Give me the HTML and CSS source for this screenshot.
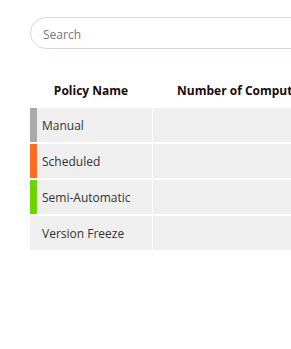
FILE: index.html
```html
<!DOCTYPE html>
<html lang="en">
<head>
    <meta charset="UTF-8">
    <meta name="viewport" content="width=device-width, initial-scale=1.0">
    <title>Policies</title>
    <link rel="stylesheet" href="styles.css">
</head>
<body>
    <div class="page">
        <input type="text" class="search-box" placeholder="Search">

        <table class="policy-table">
            <thead>
                <tr>
                    <th class="col-name">Policy Name</th>
                    <th class="col-count">Number of Computers</th>
                </tr>
            </thead>
            <tbody>
                <tr>
                    <td class="policy manual">Manual</td>
                    <td></td>
                </tr>
                <tr>
                    <td class="policy scheduled">Scheduled</td>
                    <td></td>
                </tr>
                <tr>
                    <td class="policy semi">Semi-Automatic</td>
                    <td></td>
                </tr>
                <tr>
                    <td class="policy freeze">Version Freeze</td>
                    <td></td>
                </tr>
            </tbody>
        </table>
    </div>
</body>
</html>
```

FILE: styles.css
```css
html, body {
    margin: 0;
    overflow: hidden;
}
body {
    font-family: 'Open Sans', sans-serif;
    font-size: 12px;
    color: #333;
    background-color: #fff;
}
.page {
    width: 600px;
    padding: 17px 0 0 30px;
}
.search-box {
    display: block;
    box-sizing: border-box;
    width: 420px;
    height: 32px;
    padding: 2px 12px 0;
    font-family: 'Open Sans', sans-serif;
    font-size: 12px;
    color: #333;
    border: 1px solid #d3d9e1;
    border-radius: 16px;
    outline: none;
}
.search-box::placeholder {
    color: #777;
}
.policy-table {
    margin-top: 23px;
    border-collapse: collapse;
    table-layout: fixed;
}
.policy-table th {
    height: 36px;
    font-weight: bold;
    color: #1a0a0a;
    text-align: center;
    padding: 0;
}
.col-name {
    width: 122px;
}
.col-count {
    width: 184px;
}
.policy-table td {
    height: 34px;
    padding: 0;
    background-color: #efefef;
    border-right: 1px solid #fff;
    border-bottom: 2px solid #fff;
}
.policy {
    padding-left: 12px !important;
    color: #333;
}
.manual {
    box-shadow: inset 7px 0 0 #aaaaaa;
}
.scheduled {
    box-shadow: inset 7px 0 0 #ff6a1f;
}
.semi {
    box-shadow: inset 7px 0 0 #6fd300;
}
```
